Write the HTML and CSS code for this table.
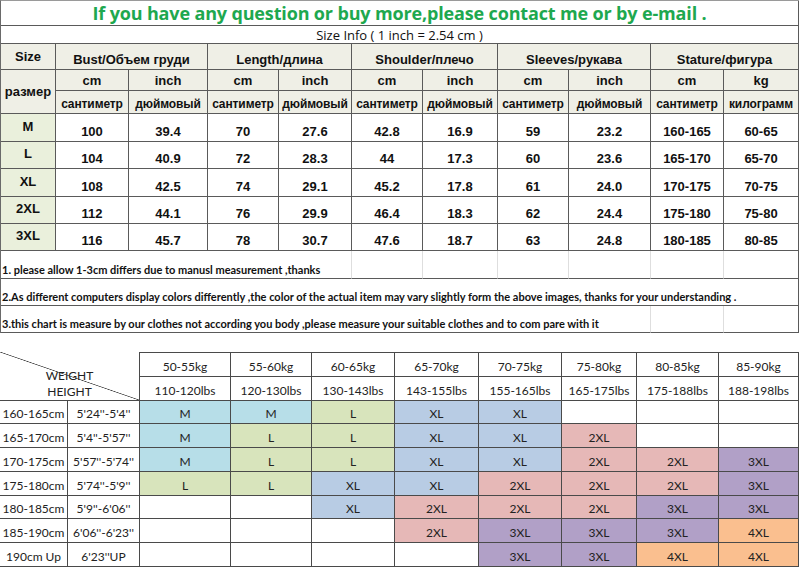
FILE: index.html
```html
<!DOCTYPE html>
<html>
<head>
<meta charset="utf-8">
<link rel="stylesheet" href="styles.css">
</head>
<body>
<div class="sizes">
  <div class="c title span11">If you have any question or buy more,please contact me or by e-mail .</div>
  <div class="c info span11">Size Info ( 1 inch = 2.54 cm )</div>

  <div class="c hd mid">Size</div>
  <div class="c hd span2">Bust/Объем груди</div>
  <div class="c hd span2">Length/длина</div>
  <div class="c hd span2">Shoulder/плечо</div>
  <div class="c hd span2">Sleeves/рукава</div>
  <div class="c hd span2">Stature/фигура</div>

  <div class="c hd mid rspan2">размер</div>
  <div class="c hd">cm</div><div class="c hd">inch</div>
  <div class="c hd">cm</div><div class="c hd">inch</div>
  <div class="c hd">cm</div><div class="c hd">inch</div>
  <div class="c hd">cm</div><div class="c hd">inch</div>
  <div class="c hd">cm</div><div class="c hd">kg</div>

  <div class="c hd ru">сантиметр</div><div class="c hd ru">дюймовый</div>
  <div class="c hd ru">сантиметр</div><div class="c hd ru">дюймовый</div>
  <div class="c hd ru">сантиметр</div><div class="c hd ru">дюймовый</div>
  <div class="c hd ru">сантиметр</div><div class="c hd ru">дюймовый</div>
  <div class="c hd ru">сантиметр</div><div class="c hd ru">килограмм</div>

  <div class="c sz">M</div><div class="c">100</div><div class="c">39.4</div><div class="c">70</div><div class="c">27.6</div><div class="c">42.8</div><div class="c">16.9</div><div class="c">59</div><div class="c">23.2</div><div class="c">160-165</div><div class="c">60-65</div>
  <div class="c sz">L</div><div class="c">104</div><div class="c">40.9</div><div class="c">72</div><div class="c">28.3</div><div class="c">44</div><div class="c">17.3</div><div class="c">60</div><div class="c">23.6</div><div class="c">165-170</div><div class="c">65-70</div>
  <div class="c sz">XL</div><div class="c">108</div><div class="c">42.5</div><div class="c">74</div><div class="c">29.1</div><div class="c">45.2</div><div class="c">17.8</div><div class="c">61</div><div class="c">24.0</div><div class="c">170-175</div><div class="c">70-75</div>
  <div class="c sz">2XL</div><div class="c">112</div><div class="c">44.1</div><div class="c">76</div><div class="c">29.9</div><div class="c">46.4</div><div class="c">18.3</div><div class="c">62</div><div class="c">24.4</div><div class="c">175-180</div><div class="c">75-80</div>
  <div class="c sz">3XL</div><div class="c">116</div><div class="c">45.7</div><div class="c">78</div><div class="c">30.7</div><div class="c">47.6</div><div class="c">18.7</div><div class="c">63</div><div class="c">24.8</div><div class="c">180-185</div><div class="c">80-85</div>

  <div class="c note span5 faint">1. please allow 1-3cm differs due to manusl measurement ,thanks</div>
  <div class="c faint"></div><div class="c faint"></div><div class="c faint"></div><div class="c faint"></div><div class="c faint"></div><div class="c"></div>
  <div class="c note span11">2.As different computers display colors differently ,the color of the actual item may vary slightly form the above images, thanks for your understanding .</div>
  <div class="c note span9 faint">3.this chart is measure by our clothes not according you body ,please measure your suitable clothes and to com pare with it</div>
  <div class="c faint"></div><div class="c"></div>
</div>

<div class="fit">
  <div class="g corner"><span>WEIGHT</span><span>HEIGHT</span></div>
  <div class="g top">50-55kg</div><div class="g top">55-60kg</div><div class="g top">60-65kg</div><div class="g top">65-70kg</div><div class="g top">70-75kg</div><div class="g top">75-80kg</div><div class="g top">80-85kg</div><div class="g top">85-90kg</div>
  <div class="g">110-120lbs</div><div class="g">120-130lbs</div><div class="g">130-143lbs</div><div class="g">143-155lbs</div><div class="g">155-165lbs</div><div class="g">165-175lbs</div><div class="g">175-188lbs</div><div class="g">188-198lbs</div>

  <div class="g">160-165cm</div><div class="g">5'24''-5'4''</div>
  <div class="g m">M</div><div class="g m">M</div><div class="g l">L</div><div class="g xl">XL</div><div class="g xl">XL</div><div class="g"></div><div class="g"></div><div class="g"></div>

  <div class="g">165-170cm</div><div class="g">5'4''-5'57''</div>
  <div class="g m">M</div><div class="g l">L</div><div class="g l">L</div><div class="g xl">XL</div><div class="g xl">XL</div><div class="g x2">2XL</div><div class="g"></div><div class="g"></div>

  <div class="g">170-175cm</div><div class="g">5'57''-5'74''</div>
  <div class="g m">M</div><div class="g l">L</div><div class="g l">L</div><div class="g xl">XL</div><div class="g xl">XL</div><div class="g x2">2XL</div><div class="g x2">2XL</div><div class="g x3">3XL</div>

  <div class="g">175-180cm</div><div class="g">5'74''-5'9''</div>
  <div class="g l">L</div><div class="g l">L</div><div class="g xl">XL</div><div class="g xl">XL</div><div class="g x2">2XL</div><div class="g x2">2XL</div><div class="g x2">2XL</div><div class="g x3">3XL</div>

  <div class="g">180-185cm</div><div class="g">5'9''-6'06''</div>
  <div class="g"></div><div class="g"></div><div class="g xl">XL</div><div class="g x2">2XL</div><div class="g x2">2XL</div><div class="g x2">2XL</div><div class="g x3">3XL</div><div class="g x3">3XL</div>

  <div class="g">185-190cm</div><div class="g">6'06''-6'23''</div>
  <div class="g"></div><div class="g"></div><div class="g"></div><div class="g x2">2XL</div><div class="g x3">3XL</div><div class="g x3">3XL</div><div class="g x3">3XL</div><div class="g x4">4XL</div>

  <div class="g">190cm Up</div><div class="g">6'23''UP</div>
  <div class="g"></div><div class="g"></div><div class="g"></div><div class="g"></div><div class="g x3">3XL</div><div class="g x3">3XL</div><div class="g x4">4XL</div><div class="g x4">4XL</div>
</div>
</body>
</html>
```

FILE: styles.css
```css
html, body {
  margin: 0;
  padding: 0;
  background: #ffffff;
}

.sizes {
  display: grid;
  grid-template-columns: 55px 73px 79px 71px 73px 71px 75px 71px 82px 73px 75px;
  grid-template-rows: 25px 18px 26px 21px 23px 28px 27px 28px 27px 27px 28px 27px 27px;
  width: 799px;
  border-left: 1px solid #6a6a6a;
  border-top: 1px solid #9a9a9a;
  box-sizing: border-box;
  font-family: "Liberation Sans", Arial, sans-serif;
  font-weight: bold;
  font-size: 13px;
  color: #111;
}

.c {
  box-sizing: border-box;
  border-right: 1px solid #5a5a5a;
  border-bottom: 1px solid #5a5a5a;
  display: flex;
  align-items: flex-end;
  justify-content: center;
  padding-bottom: 2px;
  line-height: 14px;
  white-space: nowrap;
  overflow: hidden;
}

.span11 { grid-column: span 11; }
.span9 { grid-column: span 9; }
.span5 { grid-column: span 5; }
.span2 { grid-column: span 2; }
.rspan2 { grid-row: span 2; }

.title {
  font-family: "Open Sans", sans-serif;
  font-weight: bold;
  font-size: 18px;
  letter-spacing: -0.15px;
  color: #1ea84f;
  align-items: center;
  padding-bottom: 0;
  line-height: 20px;
}

.info {
  font-family: "Open Sans", sans-serif;
  font-weight: normal;
  font-size: 13px;
  color: #111;
  align-items: center;
  padding-bottom: 0;
}

.hd {
  background: #efefe6;
}

.ru {
  font-size: 12px;
  letter-spacing: -0.1px;
}

.mid {
  align-items: center;
  padding-bottom: 0;
}

.sz {
  background: #eaf0dc;
  align-items: center;
  padding-bottom: 2px;
}

.note {
  font-family: "Lato", sans-serif;
  font-weight: bold;
  font-size: 11px;
  justify-content: flex-start;
  padding-left: 1px;
  padding-bottom: 1px;
}

.faint {
  border-right-color: #dedede;
}

.fit {
  display: grid;
  grid-template-columns: 68px 72px 91px 81px 83px 84px 83px 75px 82px 80px;
  grid-template-rows: 25px 24px 23px 24px 24px 24px 23px 24px 24px;
  width: 799px;
  margin-top: 19px;
  font-family: "Lato", sans-serif;
  font-size: 12px;
  color: #222;
}

.g {
  box-sizing: border-box;
  border-right: 1px solid #4a4a4a;
  border-bottom: 1px solid #4a4a4a;
  display: flex;
  align-items: flex-end;
  justify-content: center;
  padding-bottom: 2px;
  line-height: 14px;
  white-space: nowrap;
}

.top {
  border-top: 1px solid #4a4a4a;
}

.corner {
  grid-column: span 2;
  grid-row: span 2;
  flex-direction: column;
  align-items: center;
  justify-content: flex-end;
  padding-bottom: 0;
  line-height: 16px;
  background: linear-gradient(to top right, transparent calc(50% - 0.7px), #444 50%, transparent calc(50% + 0.7px));
}

.m { background: #b7dee8; }
.l { background: #d8e4bc; }
.xl { background: #b8cce4; }
.x2 { background: #e6b8b7; }
.x3 { background: #b1a0c7; }
.x4 { background: #fabf8f; }
```
